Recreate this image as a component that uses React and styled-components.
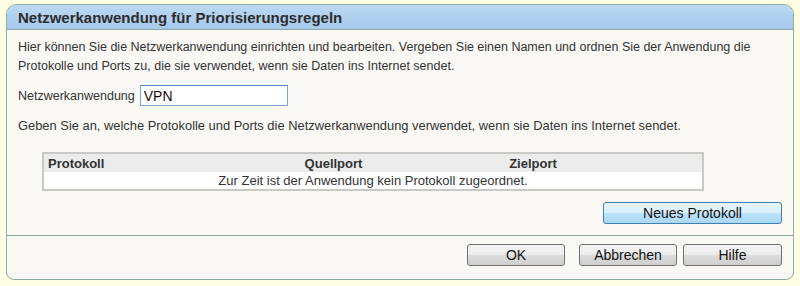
import React from "react";
import styled, { createGlobalStyle } from "styled-components";

const GlobalStyle = createGlobalStyle`
  html, body {
    margin: 0;
    padding: 0;
    background: #ffffe4;
  }
  body {
    font-family: "Liberation Sans", Arial, sans-serif;
    color: #333;
  }
`;

const Page = styled.div`
  padding: 4px 6px 0 6px;
`;

const Panel = styled.div`
  width: 786px;
  border: 1px solid #8eaaa4;
  border-radius: 10px 10px 8px 8px;
  background: #f9f8f4;
  overflow: hidden;
`;

const Header = styled.div`
  height: 24px;
  display: flex;
  align-items: center;
  padding-left: 11px;
  border-bottom: 1px solid #8eaaa4;
  background: linear-gradient(#bcd8f2, #a6c9ec);
  h1 {
    margin: 0;
    font-size: 15px;
    font-weight: bold;
    color: #2c2c2c;
  }
`;

const Content = styled.div`
  padding: 8px 11px 11px 11px;
  display: flex;
  flex-direction: column;
`;

const Text = styled.p`
  margin: ${(p) => p.$mt || 0}px 0 0 0;
  font-size: ${(p) => p.$size || 12.5}px;
  line-height: 19px;
  white-space: nowrap;
  color: #333;
`;

const FieldRow = styled.div`
  margin-top: 9px;
  display: flex;
  align-items: center;
  gap: 5px;
  font-size: 12.5px;
`;

const Input = styled.input`
  box-sizing: border-box;
  width: 148px;
  height: 21px;
  padding: 0 3px;
  border: 1px solid #7fa6cd;
  border-top-color: #5b88b8;
  background: #fff;
  font-family: "Liberation Sans", Arial, sans-serif;
  font-size: 14px;
  color: #1a0a0a;
  outline: none;
`;

const Table = styled.table`
  margin: 17px 0 0 24px;
  width: 662px;
  border-collapse: collapse;
  border: 2px solid #c8c8c4;
  font-size: 13px;
  th {
    height: 18px;
    padding: 0 4px;
    background: #ebebeb;
    font-weight: bold;
    color: #333;
    text-align: center;
  }
  th:first-child {
    text-align: left;
  }
  td {
    height: 17px;
    padding: 0;
    background: #fff;
    text-align: center;
    color: #333;
  }
`;

const ButtonRow = styled.div`
  display: flex;
  justify-content: flex-end;
  margin-top: ${(p) => p.$mt || 0}px;
`;

const Button = styled.button`
  box-sizing: border-box;
  width: ${(p) => p.$w || 98}px;
  height: 22px;
  margin-left: ${(p) => p.$ml || 0}px;
  padding: 0;
  border: 1px solid ${(p) => (p.$primary ? "#3d7fb3" : "#707070")};
  border-radius: 3px;
  background: ${(p) =>
    p.$primary
      ? "linear-gradient(#e8f5fd, #d8eefb 50%, #bde2f8 51%, #a9d8f6)"
      : "linear-gradient(#f4f4f4, #ebebeb 50%, #dcdcdc 51%, #cfcfcf)"};
  font-family: "Liberation Sans", Arial, sans-serif;
  font-size: 14px;
  color: #111;
`;

const Footer = styled.div`
  border-top: 1px solid #8eaaa4;
  padding: 8px 11px 13px 11px;
  display: flex;
  justify-content: flex-end;
`;

export default function App() {
  return (
    <Page>
      <GlobalStyle />
      <Panel>
        <Header>
          <h1>Netzwerkanwendung für Priorisierungsregeln</h1>
        </Header>
        <Content>
          <Text>
            Hier können Sie die Netzwerkanwendung einrichten und bearbeiten. Vergeben Sie einen Namen und ordnen Sie der Anwendung die
            <br />
            Protokolle und Ports zu, die sie verwendet, wenn sie Daten ins Internet sendet.
          </Text>
          <FieldRow>
            <label>Netzwerkanwendung</label>
            <Input defaultValue="VPN" />
          </FieldRow>
          <Text $mt={10} $size={12.9}>
            Geben Sie an, welche Protokolle und Ports die Netzwerkanwendung verwendet, wenn sie Daten ins Internet sendet.
          </Text>
          <Table>
            <colgroup>
              <col style={{ width: 190 }} />
              <col style={{ width: 201 }} />
              <col style={{ width: 198 }} />
              <col />
            </colgroup>
            <thead>
              <tr>
                <th>Protokoll</th>
                <th>Quellport</th>
                <th>Zielport</th>
                <th></th>
              </tr>
            </thead>
            <tbody>
              <tr>
                <td colSpan={4}>Zur Zeit ist der Anwendung kein Protokoll zugeordnet.</td>
              </tr>
            </tbody>
          </Table>
          <ButtonRow $mt={11}>
            <Button $primary $w={179}>Neues Protokoll</Button>
          </ButtonRow>
        </Content>
        <Footer>
          <Button $w={98}>OK</Button>
          <Button $w={98} $ml={14}>Abbrechen</Button>
          <Button $w={99} $ml={6}>Hilfe</Button>
        </Footer>
      </Panel>
    </Page>
  );
}
